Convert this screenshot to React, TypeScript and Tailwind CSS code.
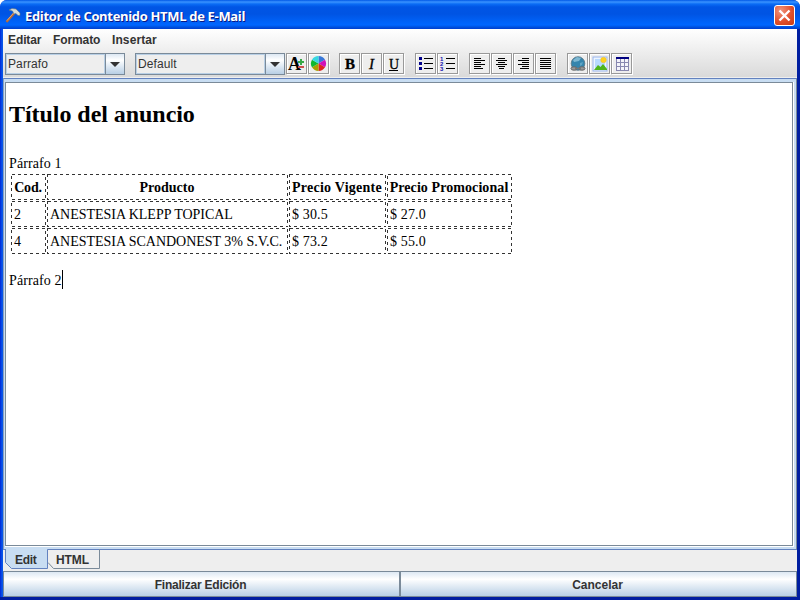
import React from 'react';

type CellProps = { w: number; size: string; children: React.ReactNode; head?: boolean; tight?: string };

/* Table cell outlined with a one pixel dashed guide, drawn clockwise from its top left corner. */
const Cell = ({ w, size, children, head, tight }: CellProps) => (
  <div className={`relative h-[26px] ${size} shrink-0 whitespace-nowrap leading-[27px] ${head ? 'pl-[2px] pr-[3px] text-center font-bold' : 'px-[3px]'} ${tight ?? ''}`}>
    <svg className="absolute left-0 top-0" width={w} height="26" shapeRendering="crispEdges">
      <path d={`M0.5 0.5H${w - 0.5}V25.5H0.5Z`} fill="none" stroke="#333" strokeDasharray="3 3" />
    </svg>
    {children}
  </div>
);

const Row = ({ cells, head }: { cells: string[]; head?: boolean }) => (
  <div className="flex gap-px">
    <Cell w={35} size="w-[35px]" head={head} tight={head ? 'tracking-[-0.2px]' : ''}>{cells[0]}</Cell>
    <Cell w={241} size="w-[241px]" head={head} tight={head ? '' : 'tracking-[-0.02px]'}>{cells[1]}</Cell>
    <Cell w={97} size="w-[97px]" head={head} tight={head ? 'tracking-[0.25px]' : 'tracking-[0.15px]'}>{cells[2]}</Cell>
    <Cell w={125} size="w-[125px]" head={head} tight={head ? 'tracking-[0.08px]' : 'tracking-[0.15px]'}>{cells[3]}</Cell>
  </div>
);

const Tool = ({ children }: { children: React.ReactNode }) => (
  <div className="h-[21px] w-[21px] border border-[#999] bg-[#eee] shadow-[inset_1px_1px_0_#fff,1px_1px_0_#fff]">
    <svg width="19" height="19" viewBox="0 0 19 19" shapeRendering="crispEdges">{children}</svg>
  </div>
);

const Group = ({ children }: { children: React.ReactNode }) => <div className="flex gap-px">{children}</div>;

const Lines = ({ rows }: { rows: number[][] }) => (
  <Tool>
    {rows.map(([x, w], i) => (
      <rect key={i} x={x} y={4 + i * 2} width={w} height="1" fill="#000" />
    ))}
  </Tool>
);

const Combo = ({ text, w }: { text: string; w: string }) => (
  <div className={`flex h-[22px] ${w} border border-[#7a8a99] bg-[#eee]`}>
    <div className="flex-1 border border-[#b8cfe5] pl-px text-[12px] leading-[18px] tracking-[0.1px] text-[#333]">{text}</div>
    <div className="flex w-[19px] items-center justify-center border-l border-[#7a8a99] bg-linear-to-b from-[#dde8f3] via-white via-30% to-[#b8cfe5]">
      <svg width="10" height="5" viewBox="0 0 10 5"><path d="M0 0h10L5 5z" fill="#333" /></svg>
    </div>
  </div>
);

const PushButton = ({ children, tight }: { children: React.ReactNode; tight: string }) => (
  <button className={`h-[26px] w-[397px] border border-[#7a8a99] bg-linear-to-b from-[#dde8f3] via-white via-30% to-[#b8cfe5] pr-[2px] pt-[2px] text-[12px] font-bold text-[#333] ${tight}`}>
    {children}
  </button>
);

export default function App() {
  return (
    <div className="flex h-[600px] w-[800px] flex-col overflow-hidden rounded-t-[7px] bg-linear-to-r from-[#0831d9] via-[#0855dd] via-50% to-[#001ea0] font-['Liberation_Sans',sans-serif]">
      <header className="flex h-[29px] shrink-0 items-center bg-[linear-gradient(180deg,#0058e6_0,#3a93ff_2px,#0a6cf5_4px,#0055e5_7px,#0054e3_14px,#0062f8_22px,#0066ff_25px,#0048d2_28px,#003dd7_29px)] pl-[5px] pr-[5px] pt-[2px]">
        <svg width="16" height="16" viewBox="0 0 16 16">
          <path d="M1.500 14L9 5.500" stroke="#b86b35" strokeWidth="2.200" />
          <path d="M2 12.500L9 4.500" stroke="#f0b078" strokeWidth="0.800" />
          <path d="M4 2L7 0.500L11 1L15 5L15 7.500L13 7.500L11 5.500L9 6L7.500 3Z" fill="#d7dcda" stroke="#68777b" strokeWidth="0.600" />
        </svg>
        <span className="ml-1 whitespace-nowrap font-['Open_Sans',sans-serif] text-[13px] font-bold leading-[20px] tracking-[-0.33px] text-white [text-shadow:1px_1px_0_#0a1883]">Editor de Contenido HTML de E-Mail</span>
        <div className="ml-auto h-[21px] w-[21px] rounded-[3px] border border-white bg-[radial-gradient(circle_at_30%_25%,#f0957d,#e1502d_55%,#c93a10)]">
          <svg width="19" height="19" viewBox="0 0 19 19"><path d="M4.500 4.500l10 10M14.500 4.500l-10 10" stroke="#fff" strokeWidth="2.400" /></svg>
        </div>
      </header>

      <div className="flex flex-1 border-b-[3px] border-b-[#001da0] bg-[linear-gradient(90deg,#0025d8_0,#0855e8_2px,#0855e8_3px,transparent_3px)] pl-[3px] pr-[3px]">
        <main className="flex w-[794px] flex-col bg-[#eee]">
          <section className="flex h-[49px] shrink-0 flex-col border-b border-[#eee] bg-linear-to-b from-white to-[#dadada]">
            <nav className="flex h-[24px] gap-[12px] pl-[5px] text-[12px] font-bold leading-[22px] text-[#333]">
              <span className="w-[33px] tracking-[-0.1px]">Editar</span>
              <span className="w-[47px] tracking-[-0.1px]">Formato</span>
              <span className="tracking-[0.1px]">Insertar</span>
            </nav>
            <div className="flex pl-[2px]">
              <Combo text="Parrafo" w="w-[120px]" />
              <div className="w-[10px]" />
              <Combo text="Default" w="w-[150px]" />
              <div className="ml-px flex">
                <Group>
                  <Tool>
                    <text x="1" y="16" fontFamily="Liberation Serif" fontSize="18" fontWeight="bold">A</text>
                    <rect x="11" y="7" width="6" height="2" fill="#38a848" />
                    <rect x="13" y="5" width="2" height="6" fill="#38a848" />
                    <rect x="11" y="12" width="6" height="2" fill="#cc5050" />
                  </Tool>
                  <Tool>
                    <g shapeRendering="auto">
                      <path d="M9.500 9.500V2A7.500 7.500 0 0 1 16 5.700Z" fill="#3878d8" />
                      <path d="M9.500 9.500L16 5.700A7.500 7.500 0 0 1 16 13.300Z" fill="#d010b8" />
                      <path d="M9.500 9.500L16 13.300A7.500 7.500 0 0 1 9.500 17Z" fill="#e02020" />
                      <path d="M9.500 9.500V17A7.500 7.500 0 0 1 3 13.300Z" fill="#a8a000" />
                      <path d="M9.500 9.500L3 13.300A7.500 7.500 0 0 1 3 5.700Z" fill="#10b830" />
                      <path d="M9.500 9.500L3 5.700A7.500 7.500 0 0 1 9.500 2Z" fill="#38d8e0" />
                    </g>
                  </Tool>
                </Group>
                <div className="ml-[10px] flex gap-[11px]">
                  <Group>
                    <Tool>
                      <text x="10" y="15" textAnchor="middle" fontFamily="Liberation Serif" fontSize="15" fontWeight="bold" stroke="#000" strokeWidth="0.300">B</text>
                    </Tool>
                    <Tool>
                      <text x="9.500" y="15" textAnchor="middle" fontFamily="Liberation Serif" fontSize="15" fontStyle="italic" stroke="#000" strokeWidth="0.300">I</text>
                    </Tool>
                    <Tool>
                      <text x="10" y="14.500" textAnchor="middle" fontFamily="Liberation Serif" fontSize="14" stroke="#000" strokeWidth="0.300">U</text>
                      <rect x="5" y="16" width="9" height="1" />
                    </Tool>
                  </Group>
                  <Group>
                    <Tool>
                      {[3, 8, 13].map((y) => (
                        <g key={y}>
                          <rect x="3" y={y} width="3" height="3" fill="#00008b" />
                          <rect x="8" y={y + 1} width="9" height="1" />
                        </g>
                      ))}
                    </Tool>
                    <Tool>
                      {[3, 8, 13].map((y, i) => (
                        <g key={y}>
                          <text x="2" y={y + 4} fontFamily="Liberation Sans" fontSize="6" fontWeight="bold" fill="#1010b0">{i + 1}</text>
                          <rect x="8" y={y + 1} width="9" height="1" />
                        </g>
                      ))}
                    </Tool>
                  </Group>
                  <Group>
                    <Lines rows={[[4, 7], [4, 11], [4, 7], [4, 11], [4, 7], [4, 9]]} />
                    <Lines rows={[[6, 7], [4, 11], [6, 7], [4, 11], [6, 7], [7, 5]]} />
                    <Lines rows={[[8, 7], [4, 11], [8, 7], [4, 11], [8, 7], [6, 9]]} />
                    <Lines rows={[[4, 11], [4, 11], [4, 11], [4, 11], [4, 11], [4, 11]]} />
                  </Group>
                  <Group>
                    <Tool>
                      <g shapeRendering="auto">
                        <circle cx="10" cy="9.500" r="6.800" fill="#3585ad" stroke="#55717f" strokeWidth="0.800" />
                        <path d="M5 6l4-3 4 1-2 3-5 1z" fill="#7fb8d2" />
                        <path d="M12 9l3-1-1 3-2 1z" fill="#60a5c4" />
                        <ellipse cx="6" cy="14.500" rx="3" ry="1.700" fill="#999" stroke="#666" />
                        <ellipse cx="14" cy="14.500" rx="3" ry="1.700" fill="#999" stroke="#666" />
                        <path d="M7 14.500h6" stroke="#777" strokeWidth="1.500" />
                      </g>
                    </Tool>
                    <Tool>
                      <g shapeRendering="auto">
                        <rect x="3" y="3" width="14" height="14" fill="#edf5ff" stroke="#9ab5ed" />
                        <rect x="5" y="5" width="10" height="10" fill="#b8daff" />
                        <path d="M4 16l4-5 2.500 2L13 10l4 5v1z" fill="#4fb51c" />
                        <circle cx="13.500" cy="6" r="2.800" fill="#ffd21c" stroke="#eebc32" strokeWidth="0.500" />
                      </g>
                    </Tool>
                    <Tool>
                      <rect x="4" y="4" width="13" height="13" fill="#f4f4fa" />
                      <path d="M4.500 4v13M8.500 4v13M12.500 4v13M16.500 4v13M4 8.500h13M4 12.500h13M4 16.500h13" stroke="#8888b0" />
                      <rect x="4" y="3" width="13" height="2" fill="#000080" />
                    </Tool>
                  </Group>
                </div>
              </div>
            </div>
          </section>

          <section className="h-[472px] shrink-0 border-b border-l border-r border-t border-b-[#6382bf] border-l-[#8ba0bd] border-r-[#7a8a99] border-t-[#6382bf] bg-[#c8ddf2] pb-[2px] pl-px pr-[2px] pt-[3px]">
            <div className="h-full border-b border-r border-white">
              <article className="h-full border border-[#7a8a99] bg-white pl-[3px] font-['Liberation_Serif',serif] text-[14px] text-black">
                <h1 className="pt-[17px] text-[24px] font-bold leading-[28px] tracking-[-0.05px]">Título del anuncio</h1>
                <p className="mt-[26px] h-[20px] leading-[19px] tracking-[0.1px]">Párrafo 1</p>
                <div className="ml-[2px] flex flex-col gap-px">
                  <Row head cells={['Cod.', 'Producto', 'Precio Vigente', 'Precio Promocional']} />
                  <Row cells={['2', 'ANESTESIA KLEPP TOPICAL', '$ 30.5', '$ 27.0']} />
                  <Row cells={['4', 'ANESTESIA SCANDONEST 3% S.V.C.', '$ 73.2', '$ 55.0']} />
                </div>
                <p className="mt-[16px] flex h-[19px] leading-[21px] tracking-[0.1px]">
                  Párrafo 2<span className="h-[19px] w-px bg-black" />
                </p>
              </article>
            </div>
          </section>

          <nav className="flex h-[21px] shrink-0 pl-[2px] text-[12px] font-bold leading-[19px] text-[#333]">
            <svg className="-mt-px" width="96" height="20" viewBox="0 0 96 20">
              <path d="M0.500 0V13.500L6.500 19.500H42.500V0Z" fill="#c8ddf2" />
              <path d="M0.500 0V13.500L6.500 19.500H42.500V0.500" fill="none" stroke="#6382bf" />
              <path d="M43 13.500L48.500 19.500H94.500V0" fill="none" stroke="#7a8a99" />
              <text x="10" y="15" fill="#333" letterSpacing="-0.3">Edit</text>
              <text x="51" y="15" fill="#333" letterSpacing="-0.1">HTML</text>
            </svg>
          </nav>

          <footer className="flex">
            <PushButton tight="tracking-[-0.22px]">Finalizar Edición</PushButton>
            <PushButton tight="">Cancelar</PushButton>
          </footer>
        </main>
      </div>
    </div>
  );
}
